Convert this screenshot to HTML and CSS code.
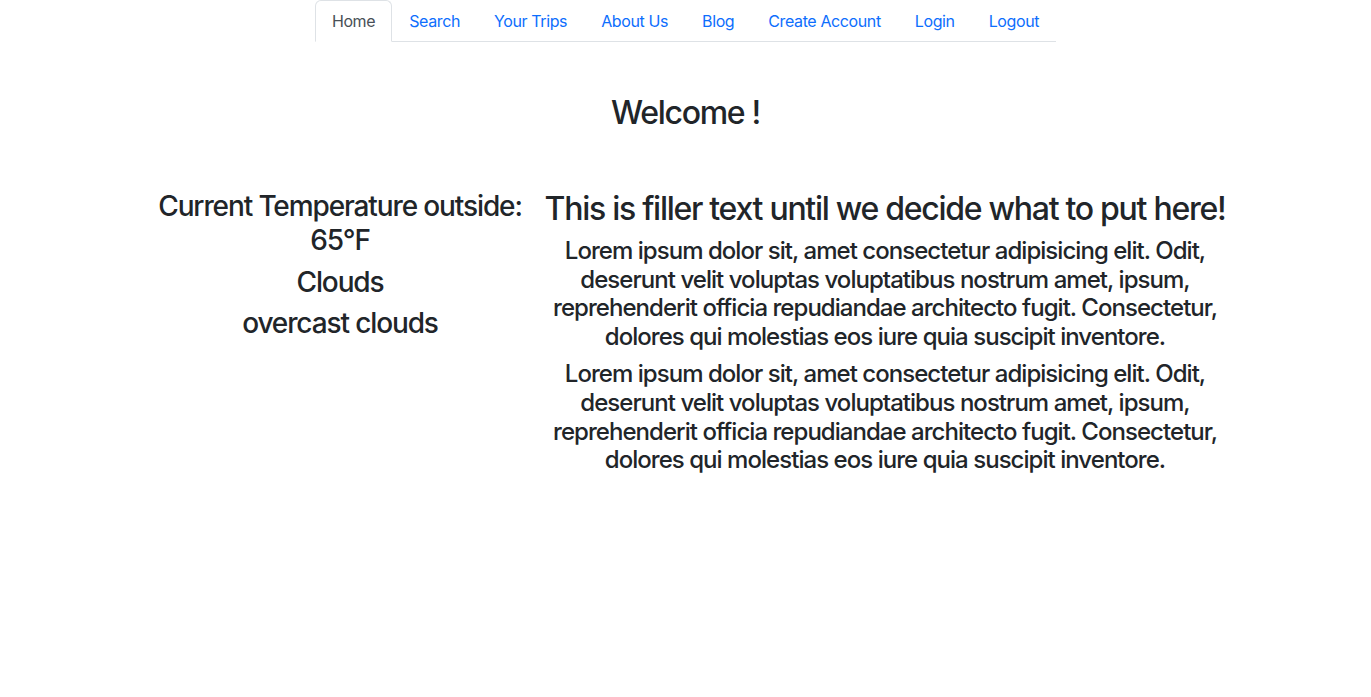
FILE: index.html
```html
<!DOCTYPE html>
<html lang="en">
<head>
<meta charset="utf-8">
<title>Home</title>
<link rel="stylesheet" href="styles.css">
</head>
<body>
<ul class="nav-tabs">
  <li><a class="nav-link active" href="#">Home</a></li>
  <li><a class="nav-link" href="#">Search</a></li>
  <li><a class="nav-link" href="#">Your Trips</a></li>
  <li><a class="nav-link" href="#">About Us</a></li>
  <li><a class="nav-link" href="#">Blog</a></li>
  <li><a class="nav-link" href="#">Create Account</a></li>
  <li><a class="nav-link" href="#">Login</a></li>
  <li><a class="nav-link" href="#">Logout</a></li>
</ul>
<main class="main">
  <h2 class="welcome">Welcome !</h2>
  <div class="row">
    <div class="col-weather">
      <h3>Current Temperature outside: 65°F</h3>
      <h3>Clouds</h3>
      <h3>overcast clouds</h3>
    </div>
    <div class="col-text">
      <h2 class="filler">This is filler text until we decide what to put here!</h2>
      <h4>Lorem ipsum dolor sit, amet consectetur adipisicing elit. Odit, deserunt velit voluptas voluptatibus nostrum amet, ipsum, reprehenderit officia repudiandae architecto fugit. Consectetur, dolores qui molestias eos iure quia suscipit inventore.</h4>
      <h4>Lorem ipsum dolor sit, amet consectetur adipisicing elit. Odit, deserunt velit voluptas voluptatibus nostrum amet, ipsum, reprehenderit officia repudiandae architecto fugit. Consectetur, dolores qui molestias eos iure quia suscipit inventore.</h4>
    </div>
  </div>
</main>
</body>
</html>
```
FILE: styles.css
```css
* { box-sizing: border-box; }
html, body { margin: 0; padding: 0; }
body {
  font-family: Inter, "Noto Sans", "Liberation Sans", sans-serif;
  font-size: 16px;
  line-height: 1.5;
  color: #212529;
  background: #fff;
  letter-spacing: -0.024em;
}
h2, h3, h4 {
  margin: 0 0 8px;
  font-weight: 500;
  line-height: 1.2;
  letter-spacing: -0.04em;
}
h2 { font-size: 32px; }
h3 { font-size: 28px; }
h4 { font-size: 24px; }

.nav-tabs {
  display: flex;
  width: fit-content;
  margin: 0 auto;
  padding: 0;
  list-style: none;
  border-bottom: 1px solid #dee2e6;
}
.nav-tabs li { margin-bottom: -1px; }
.nav-link {
  display: block;
  padding: 8px 16px;
  border: 1px solid transparent;
  border-top-left-radius: 6px;
  border-top-right-radius: 6px;
  color: #0d6efd;
  text-decoration: none;
  font-size: 16px;
  line-height: 24px;
}
.nav-link.active {
  color: #495057;
  background: #fff;
  border-color: #dee2e6 #dee2e6 #fff;
}

.main { text-align: center; }
.welcome { margin: 52px 0 0; }
.row {
  display: flex;
  margin: 58px 0 0 148px;
  width: 1090px;
}
.col-weather {
  width: 384px;
  padding: 0 10px;
}
.col-text {
  width: 706px;
  padding: 0 10px;
}
.filler { margin-bottom: 8px; }
```
